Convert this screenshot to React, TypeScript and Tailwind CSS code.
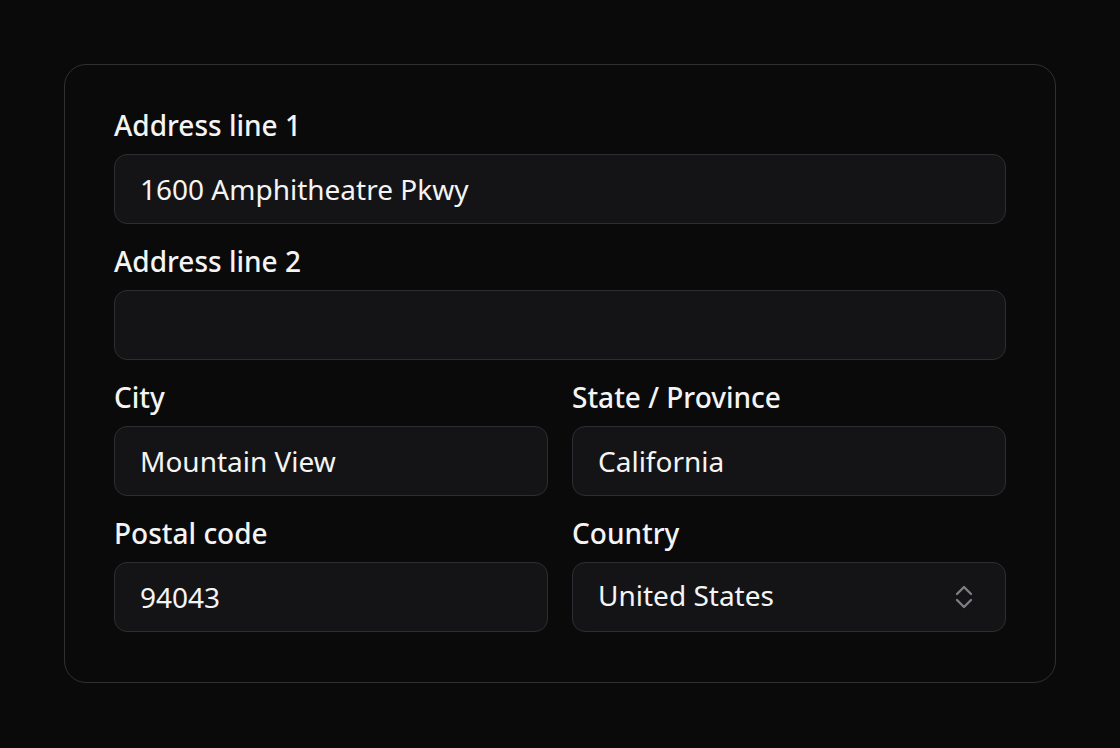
import React from "react";

function UpDown() {
  return (
    <svg width="18" height="24" viewBox="0 0 18 24" fill="none" stroke="currentColor" strokeWidth="2.4" strokeLinecap="round" strokeLinejoin="round" className="text-[#7d7d82]">
      <path d="M2 9 L9 2 L16 9" />
      <path d="M2 15 L9 22 L16 15" />
    </svg>
  );
}

function Field({ label, value, select = false }: { label: string; value: string; select?: boolean }) {
  return (
    <label className="flex flex-col">
      <span className="text-[28px] leading-[36px] font-medium text-[#f4f4f5]">{label}</span>
      <div className="mt-[11px] h-[70px] shrink-0 rounded-[13px] border border-[#2e2e32] bg-[#141416] flex items-center pl-[25px] pr-[32px]">
        <span className={"flex-1 text-[28px] leading-[40px] text-[#f4f4f5] " + (select ? "-mt-[4px]" : "")}>{value}</span>
        {select && <UpDown />}
      </div>
    </label>
  );
}

export default function App() {
  return (
    <main className="min-h-screen bg-[#0a0a0b] pt-[64px] px-[64px] font-['Noto_Sans',sans-serif]">
      <div className="w-[992px] rounded-[22px] border border-[#303034] px-[49px] pt-[42px] pb-[50px] flex flex-col gap-[19px]">
        <Field label="Address line 1" value="1600 Amphitheatre Pkwy" />
        <Field label="Address line 2" value="" />
        <div className="grid grid-cols-2 gap-x-[24px] gap-y-[19px]">
          <Field label="City" value="Mountain View" />
          <Field label="State / Province" value="California" />
          <Field label="Postal code" value="94043" />
          <Field label="Country" value="United States" select />
        </div>
      </div>
    </main>
  );
}
